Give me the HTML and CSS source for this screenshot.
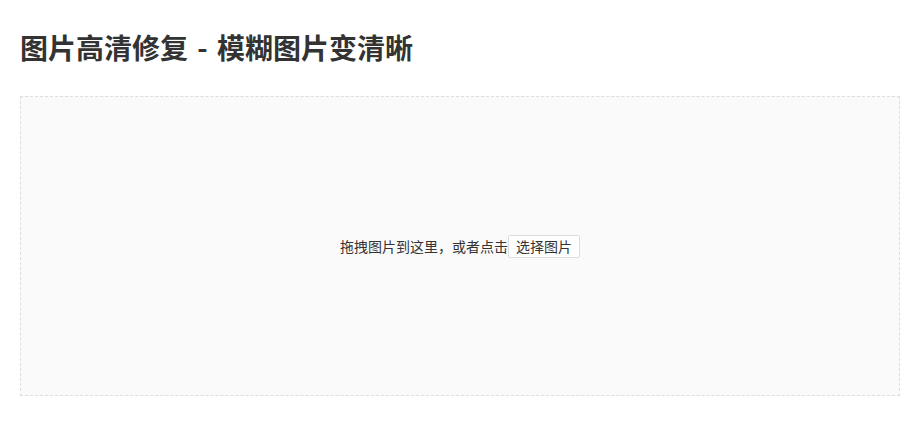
FILE: index.html
```html
<!DOCTYPE html>
<html lang="zh-CN">
<head>
<meta charset="utf-8">
<title>图片高清修复</title>
<link rel="stylesheet" href="styles.css">
</head>
<body>
<div class="page">
  <h1 class="title">图片高清修复 - 模糊图片变清晰</h1>
  <div class="dropzone">
    <span class="hint">拖拽图片到这里，或者点击</span><button class="pick" type="button">选择图片</button>
  </div>
</div>
</body>
</html>
```

FILE: styles.css
```css
html, body {
  margin: 0;
  padding: 0;
  background: #ffffff;
}
body {
  font-family: "Noto Sans CJK SC", "Noto Sans", sans-serif;
  color: #333333;
}
.page {
  padding: 27px 20px 20px 20px;
}
.title {
  margin: 0 0 29px 0;
  font-size: 28px;
  line-height: 40px;
  font-weight: 700;
  color: #333333;
  word-spacing: 3px;
}
.dropzone {
  box-sizing: border-box;
  width: 880px;
  height: 300px;
  border: 1px dashed #dddddd;
  background: #fafafa;
  display: flex;
  align-items: center;
  justify-content: center;
}
.hint {
  font-size: 14px;
  line-height: 20px;
  color: #333333;
}
.pick {
  font-family: "Noto Sans CJK SC", "Noto Sans", sans-serif;
  font-size: 14px;
  line-height: 21px;
  padding: 0 7px;
  margin: 0;
  border: 1px solid #dddddd;
  border-radius: 2px;
  background: #ffffff;
  color: #333333;
  cursor: pointer;
}
```
